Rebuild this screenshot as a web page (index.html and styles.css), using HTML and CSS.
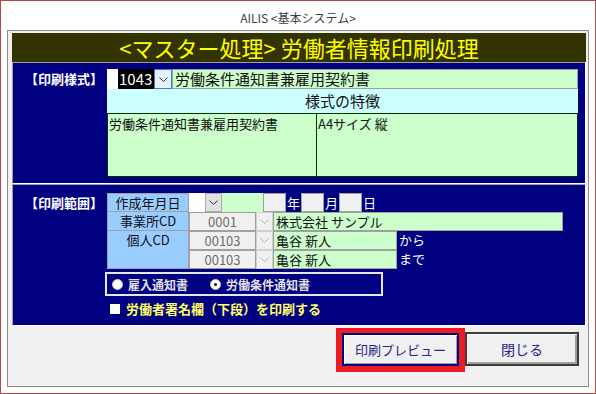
FILE: index.html
```html
<!DOCTYPE html>
<html lang="ja">
<head>
  <meta charset="UTF-8" />
  <meta name="viewport" content="width=device-width, initial-scale=1.0"/>
  <title>AILIS &lt;基本システム&gt;</title>
  <link rel="stylesheet" href="styles.css">
</head>
<body>

<div class="window">
  <div class="titlebar">AILIS &lt;基本システム&gt;</div>

  <div class="client">
    <div class="header">&lt;マスター処理&gt; 労働者情報印刷処理</div>

    <!-- 印刷様式 -->
    <div class="panel panel-style">
      <div class="panel-label">【印刷様式】</div>
      <div class="panel-body">
        <div class="code-row">
          <span class="code-pad"></span>
          <span class="code-value">1043</span>
          <span class="combo-btn focused">
            <svg width="9" height="5" viewBox="0 0 9 5"><polyline points="0.5,0.5 4.5,4.5 8.5,0.5" fill="none" stroke="#333" stroke-width="1"/></svg>
          </span>
          <span class="field green name-field">労働条件通知書兼雇用契約書</span>
        </div>
        <div class="feature-head">様式の特徴</div>
        <div class="feature-box">
          <div class="feature-cell first">労働条件通知書兼雇用契約書</div>
          <div class="feature-cell">A4サイズ 縦</div>
        </div>
      </div>
    </div>

    <!-- 印刷範囲 -->
    <div class="panel panel-range">
      <div class="panel-label">【印刷範囲】</div>
      <div class="panel-body">
        <div class="range-grid">
          <div class="cell-label top">作成年月日</div>
          <div class="date-row">
            <span class="date-pad"></span>
            <span class="combo-btn">
              <svg width="9" height="5" viewBox="0 0 9 5"><polyline points="0.5,0.5 4.5,4.5 8.5,0.5" fill="none" stroke="#333" stroke-width="1"/></svg>
            </span>
            <span class="date-green"></span>
            <span class="date-box"></span><span class="unit">年</span>
            <span class="date-box"></span><span class="unit">月</span>
            <span class="date-box"></span><span class="unit">日</span>
          </div>

          <div class="cell-label">事業所CD</div>
          <div class="field disabled">0001</div>
          <div class="combo-btn disabled">
            <svg width="9" height="5" viewBox="0 0 9 5"><polyline points="0.5,0.5 4.5,4.5 8.5,0.5" fill="none" stroke="#b4b4b4" stroke-width="1"/></svg>
          </div>
          <div class="name-cell"><span class="field green company">株式会社 サンプル</span></div>

          <div class="cell-label person">個人CD</div>
          <div class="field disabled">00103</div>
          <div class="combo-btn disabled">
            <svg width="9" height="5" viewBox="0 0 9 5"><polyline points="0.5,0.5 4.5,4.5 8.5,0.5" fill="none" stroke="#b4b4b4" stroke-width="1"/></svg>
          </div>
          <div class="name-cell"><span class="field green person-name">亀谷 新人</span><span class="suffix">から</span></div>

          <div class="field disabled">00103</div>
          <div class="combo-btn disabled">
            <svg width="9" height="5" viewBox="0 0 9 5"><polyline points="0.5,0.5 4.5,4.5 8.5,0.5" fill="none" stroke="#b4b4b4" stroke-width="1"/></svg>
          </div>
          <div class="name-cell"><span class="field green person-name">亀谷 新人</span><span class="suffix">まで</span></div>
        </div>

        <div class="radio-group">
          <label class="radio"><span class="radio-dot"></span>雇入通知書</label>
          <label class="radio"><span class="radio-dot checked"></span>労働条件通知書</label>
        </div>

        <div class="check-row">
          <span class="check-box"></span>
          <span class="check-text">労働者署名欄（下段）を印刷する</span>
        </div>
      </div>
    </div>

    <div class="actions">
      <div class="preview-frame">
        <button class="btn btn-preview">印刷プレビュー</button>
      </div>
      <button class="btn btn-close">閉じる</button>
    </div>
  </div>
</div>

</body>
</html>
```

FILE: styles.css
```css
* {
  box-sizing: border-box;
}

body {
  margin: 0;
  background: #fff;
  font-family: "Noto Sans CJK JP", "Noto Sans", sans-serif;
  color: #111;
}

.window {
  width: 596px;
  height: 394px;
  border: 1px solid #b0484c;
  background: #fff;
  display: flex;
  flex-direction: column;
}

.titlebar {
  height: 29px;
  padding-top: 9px;
  text-align: center;
  font-size: 12px;
  line-height: 16px;
  color: #3c3c3c;
}

.client {
  flex: 1;
  margin: 0 6px 6px;
  padding: 2px 2px 0 4px;
  border: 1px solid #8e8e8e;
  background: #f0f0f0;
  display: flex;
  flex-direction: column;
}

.header {
  height: 29px;
  background: #333300;
  color: #ffff00;
  font-size: 22px;
  line-height: 29px;
  text-align: center;
  white-space: nowrap;
}

/* sunken navy panels */
.panel {
  display: flex;
  background: #000080;
  border: 1px solid;
  border-color: #a0a0a0 #fff #fff #a0a0a0;
}

.panel-style {
  height: 122px;
  padding-top: 6px;
}

.panel-range {
  height: 142px;
  padding-top: 8px;
}

.panel-label {
  width: 94px;
  padding-left: 12px;
  color: #fff;
  font-size: 13px;
  font-weight: bold;
  line-height: 20px;
  white-space: nowrap;
}

.panel-body {
  width: 471px;
}

.code-row {
  display: flex;
  height: 20px;
}

.code-pad {
  width: 11px;
  background: #fff;
}

.code-value {
  width: 36px;
  background: #000;
  color: #fff;
  font-size: 15px;
  line-height: 20px;
  padding-left: 1px;
}

.combo-btn {
  width: 18px;
  display: flex;
  align-items: center;
  justify-content: center;
  background: #e1e1e1;
  border: 1px solid #adadad;
}

.combo-btn.focused {
  background: #e5f1fb;
  border-color: #3c7fd0;
}

.combo-btn.disabled {
  width: 17px;
  background: #f0f0f0;
  border-color: #d0d0d0;
}

.field {
  border: 1px solid #a0a0a0;
  font-size: 13px;
  line-height: 17px;
  padding-left: 2px;
  white-space: nowrap;
  overflow: hidden;
}

.green {
  background: #ccffcc;
}

.name-field {
  flex: 1;
  font-size: 15px;
  line-height: 18px;
}

.feature-head {
  height: 24px;
  background: #ccffff;
  text-align: center;
  font-size: 15px;
  line-height: 24px;
}

.feature-box {
  display: flex;
  height: 64px;
  border: 1px solid #003300;
  background: #ccffcc;
  font-size: 13px;
  line-height: 18px;
}

.feature-cell {
  padding: 1px;
}

.feature-cell.first {
  width: 209px;
  border-right: 1px solid #003300;
}

/* 印刷範囲 table */
.range-grid {
  display: grid;
  grid-template-columns: 82px 67px 17px 1fr;
  grid-template-rows: repeat(4, 19px);
}

.cell-label {
  background: #99ccff;
  border: 1px solid #a0a0a0;
  border-top: 0;
  text-align: center;
  font-size: 13px;
  line-height: 17px;
}

.cell-label.top {
  border-top: 1px solid #a0a0a0;
}

.cell-label.person {
  grid-row: span 2;
}

.date-row {
  grid-column: 2 / -1;
  display: flex;
}

.date-pad {
  width: 16px;
  background: #fff;
}

.date-row .combo-btn {
  width: 17px;
}

.date-green {
  width: 41px;
  background: #ccffcc;
}

.date-box {
  width: 23px;
  background: #f0f0f0;
  border: 1px solid #a0a0a0;
}

.unit {
  width: 15px;
  color: #fff;
  font-size: 13px;
  line-height: 19px;
  text-align: center;
}

.field.disabled {
  background: #f0f0f0;
  color: #6d6d6d;
  text-align: center;
  padding-left: 0;
}

.name-cell {
  display: flex;
}

.company {
  width: 290px;
}

.person-name {
  width: 124px;
}

.suffix {
  color: #fff;
  font-size: 13px;
  line-height: 17px;
  padding-left: 2px;
}

.radio-group {
  width: 278px;
  height: 24px;
  margin: 3px 0 0 -2px;
  padding-left: 5px;
  border: 2px solid #e6e6e6;
  display: flex;
  align-items: center;
  gap: 22px;
}

.radio {
  display: flex;
  align-items: center;
  gap: 5px;
  color: #e4e4e4;
  font-size: 12px;
  font-weight: bold;
}

.radio-dot {
  position: relative;
  width: 11px;
  height: 11px;
  border-radius: 50%;
  background: #fff;
  border: 1px solid #c8c8c8;
}

.radio-dot.checked::after {
  content: "";
  position: absolute;
  left: 3px;
  top: 3px;
  width: 3px;
  height: 3px;
  border-radius: 50%;
  background: #000;
}

.check-row {
  display: flex;
  align-items: center;
  gap: 6px;
  margin-top: 5px;
  padding-left: 3px;
}

.check-box {
  width: 10px;
  height: 10px;
  background: #fff;
}

.check-text {
  color: #ffff66;
  font-size: 13px;
  font-weight: bold;
  line-height: 16px;
}

/* buttons */
.actions {
  display: flex;
  justify-content: flex-end;
  align-items: flex-start;
  margin-top: 2px;
  padding-right: 7px;
}

.preview-frame {
  border: 6px solid #ed1c24;
  border-top-width: 5px;
}

.btn {
  background: #f0f0f0;
  color: #24248a;
  font-family: inherit;
  padding: 0;
}

.btn-preview {
  display: block;
  width: 117px;
  height: 33px;
  font-size: 13px;
  border: 2px solid #000080;
  box-shadow: inset 1px 1px #fff, inset -1px -1px #a0a0a0;
}

.btn-close {
  width: 114px;
  height: 34px;
  margin-top: 4px;
  font-size: 14px;
  border: 2px solid #3c3c3c;
  box-shadow: inset 1px 1px #fff, inset -2px -2px #a0a0a0;
}
```
